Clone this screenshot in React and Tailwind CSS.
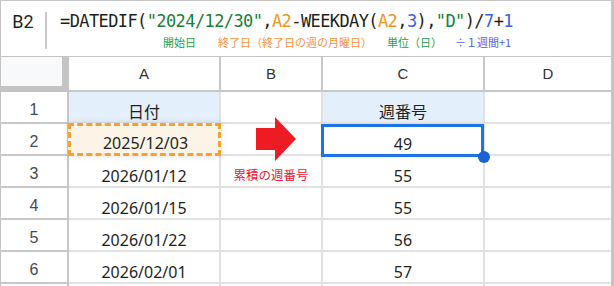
import React from "react";

const cellFont = { fontFamily: '"Noto Sans", "Noto Sans CJK JP", sans-serif' };
const headFont = { fontFamily: '"Liberation Sans", Arial, sans-serif' };

const rows = [
  { n: 1, a: "日付", b: "", c: "週番号" },
  { n: 2, a: "2025/12/03", b: "", c: "49" },
  { n: 3, a: "2026/01/12", b: "累積の週番号", c: "55" },
  { n: 4, a: "2026/01/15", b: "", c: "55" },
  { n: 5, a: "2026/01/22", b: "", c: "56" },
  { n: 6, a: "2026/02/01", b: "", c: "57" },
  { n: 7, a: "", b: "", c: "" },
];

function FormulaBar() {
  return (
    <div className="flex h-[56px] border-b border-[#c4c4c4]">
      <div
        className="w-[44px] pt-[11px] text-center text-[18px] leading-5 text-[#1f1f1f]"
        style={{ fontFamily: "Roboto, sans-serif" }}
      >
        B2
      </div>
      <div className="mt-[11px] h-[37px] w-[2px] bg-[#c8c8c8]" />
      <div className="pl-[13px]">
        <div
          className="pt-[10px] text-[17px] leading-5 tracking-[-0.6px] text-[#1f1f1f] whitespace-nowrap"
          style={{ fontFamily: '"DejaVu Sans Mono", monospace' }}
        >
          =DATEDIF(<span className="text-[#188038]">"2024/12/30"</span>,
          <span className="text-[#f29422]">A2</span>-WEEKDAY(
          <span className="text-[#f29422]">A2</span>,
          <span className="text-[#3b5fd9]">3</span>),
          <span className="text-[#188038]">"D"</span>)/
          <span className="text-[#3b5fd9]">7</span>+
          <span className="text-[#3b5fd9]">1</span>
        </div>
        <div
          className="mt-[4px] flex text-[11px] leading-[14px] whitespace-nowrap"
          style={{ fontFamily: '"Noto Sans CJK JP", sans-serif' }}
        >
          <span className="ml-[103px] text-[#22a04b]">開始日</span>
          <span className="ml-[22px] text-[#f4923a]">終了日（終了日の週の月曜日）</span>
          <span className="ml-[15px] text-[#22a04b]">単位（日）</span>
          <span className="ml-[13px] text-[#4f5fe0]">÷１週間+1</span>
        </div>
      </div>
    </div>
  );
}

function ColHeader({ label, last }) {
  return (
    <div
      className={`flex h-[35px] items-center justify-center border-b-2 border-[#c7c7c7] pt-[2px] text-[15px] text-[#333] ${
        last ? "" : "border-r-2"
      }`}
      style={headFont}
    >
      {label}
    </div>
  );
}

function Row({ r }) {
  const head = r.n === 1;
  const base = "relative flex h-[32px] items-end justify-center border-b-2 border-[#e1e1e1] leading-5";
  return (
    <>
      <div
        className="flex h-[32px] items-end justify-center border-r-2 border-b-2 border-[#c7c7c7] pb-[2px] text-[16px] leading-5 text-[#444b55]"
        style={headFont}
      >
        {r.n < 7 ? r.n : ""}
      </div>

      <div className={`${base} border-r-2 text-[16px] text-[#1f1f1f] ${head ? "bg-[#e4effc]" : ""}`} style={cellFont}>
        {r.n === 2 ? (
          <div className="absolute left-[-1px] top-[-1px] z-10 flex h-[33px] w-[153px] items-end justify-center border-[3px] border-dashed border-[#f6a02f] bg-[#fdf4e8] shadow-[0_0_6px_rgba(0,0,0,0.12)]">
            <span className="pl-[2px]">{r.a}</span>
          </div>
        ) : (
          r.a
        )}
      </div>

      <div className={`${base} border-r-2 text-[12.5px] text-[#e8192c]`} style={cellFont}>
        {r.b}
      </div>

      <div className={`${base} border-r-2 text-[16px] text-[#1f1f1f] ${head ? "bg-[#e4effc]" : ""}`} style={cellFont}>
        {r.c}
        {r.n === 2 && (
          <>
            <div className="absolute left-[-2px] top-0 z-10 h-[33px] w-[163px] border-[3px] border-[#1a73e8]" />
            <div className="absolute left-[155px] top-[27px] z-20 h-3 w-3 rounded-full bg-[#1a62d6]" />
          </>
        )}
      </div>

      <div className={base} />
    </>
  );
}

export default function App() {
  return (
    <div className="h-[286px] w-[614px] overflow-hidden border-t border-l border-r-[3px] border-[#c4c4c4] bg-white">
      <FormulaBar />
      <div className="relative grid grid-cols-[68px_152px_102px_162px_126px]">
        <div className="h-[35px] bg-[#c4c4c4]">
          <div className="h-[29px] w-[61px] bg-[#f8f9fa]" />
        </div>
        <ColHeader label="A" />
        <ColHeader label="B" />
        <ColHeader label="C" />
        <ColHeader label="D" last />
        {rows.map((r) => (
          <Row key={r.n} r={r} />
        ))}

        {/* red arrow over B1:B2 */}
        <svg className="absolute left-[255px] top-[60px] z-10" width="40" height="44" viewBox="0 0 40 44">
          <polygon points="0,11 19,11 19,0 40,22 19,44 19,33 0,33" fill="#ed1c24" />
        </svg>
      </div>
    </div>
  );
}
